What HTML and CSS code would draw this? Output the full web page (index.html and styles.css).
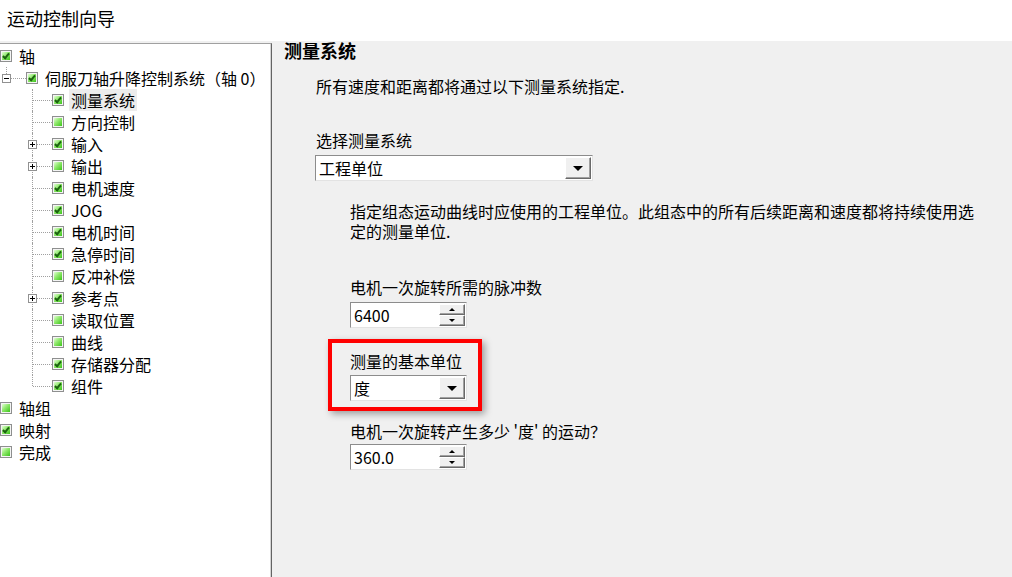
FILE: index.html
```html
<!DOCTYPE html>
<html lang="zh-CN">
<head>
    <meta charset="UTF-8">
    <title>运动控制向导</title>
    <link rel="stylesheet" href="styles.css">
</head>
<body>

<div class="title-bar">运动控制向导</div>

<div class="main">
    <div class="tree">
        <div class="row"><span class="cb checked"></span><span class="label">轴</span></div>
        <div class="row"><span class="cell ell"><span class="exp minus"></span></span><span class="cb checked"></span><span class="label">伺服刀轴升降控制系统（轴 0）</span></div>
        <div class="row"><span class="cell"></span><span class="cell tee"></span><span class="cb checked"></span><span class="label selected">测量系统</span></div>
        <div class="row"><span class="cell"></span><span class="cell tee"></span><span class="cb"></span><span class="label">方向控制</span></div>
        <div class="row"><span class="cell"></span><span class="cell tee"><span class="exp plus"></span></span><span class="cb checked"></span><span class="label">输入</span></div>
        <div class="row"><span class="cell"></span><span class="cell tee"><span class="exp plus"></span></span><span class="cb"></span><span class="label">输出</span></div>
        <div class="row"><span class="cell"></span><span class="cell tee"></span><span class="cb checked"></span><span class="label">电机速度</span></div>
        <div class="row"><span class="cell"></span><span class="cell tee"></span><span class="cb checked"></span><span class="label">JOG</span></div>
        <div class="row"><span class="cell"></span><span class="cell tee"></span><span class="cb checked"></span><span class="label">电机时间</span></div>
        <div class="row"><span class="cell"></span><span class="cell tee"></span><span class="cb checked"></span><span class="label">急停时间</span></div>
        <div class="row"><span class="cell"></span><span class="cell tee"></span><span class="cb"></span><span class="label">反冲补偿</span></div>
        <div class="row"><span class="cell"></span><span class="cell tee"><span class="exp plus"></span></span><span class="cb checked"></span><span class="label">参考点</span></div>
        <div class="row"><span class="cell"></span><span class="cell tee"></span><span class="cb"></span><span class="label">读取位置</span></div>
        <div class="row"><span class="cell"></span><span class="cell tee"></span><span class="cb"></span><span class="label">曲线</span></div>
        <div class="row"><span class="cell"></span><span class="cell tee"></span><span class="cb checked"></span><span class="label">存储器分配</span></div>
        <div class="row"><span class="cell"></span><span class="cell ell"></span><span class="cb checked"></span><span class="label">组件</span></div>
        <div class="row"><span class="cb"></span><span class="label">轴组</span></div>
        <div class="row"><span class="cb checked"></span><span class="label">映射</span></div>
        <div class="row"><span class="cb"></span><span class="label">完成</span></div>
    </div>

    <div class="content">
        <h2 class="heading">测量系统</h2>
        <p class="intro">所有速度和距离都将通过以下测量系统指定.</p>

        <div class="field-label system-label">选择测量系统</div>
        <div class="combo combo-wide">
            <span class="combo-text">工程单位</span>
            <span class="combo-btn"><span class="arrow-down"></span></span>
        </div>

        <p class="note">指定组态运动曲线时应使用的工程单位。此组态中的所有后续距离和速度都将持续使用选<br>定的测量单位.</p>

        <div class="group">
            <div class="field-label pulse-label">电机一次旋转所需的脉冲数</div>
            <div class="spin">
                <span class="spin-text">6400</span>
                <span class="spin-btns">
                    <span class="spin-btn"><span class="tri-up"></span></span>
                    <span class="spin-btn"><span class="tri-down"></span></span>
                </span>
            </div>

            <div class="highlight">
                <div class="field-label">测量的基本单位</div>
                <div class="combo combo-small">
                    <span class="combo-text">度</span>
                    <span class="combo-btn"><span class="arrow-down"></span></span>
                </div>
            </div>

            <div class="field-label travel-label">电机一次旋转产生多少 '度' 的运动？</div>
            <div class="spin">
                <span class="spin-text">360.0</span>
                <span class="spin-btns">
                    <span class="spin-btn"><span class="tri-up"></span></span>
                    <span class="spin-btn"><span class="tri-down"></span></span>
                </span>
            </div>
        </div>
    </div>
</div>

</body>
</html>
```

FILE: styles.css
```css
body {
    margin: 0;
    font-family: "Noto Sans CJK SC", "Noto Sans", sans-serif;
    font-size: 16px;
    color: #000;
    background: #f0f0f0;
    height: 577px;
    overflow: hidden;
    display: flex;
    flex-direction: column;
}
.title-bar {
    height: 41px;
    box-sizing: border-box;
    padding: 7px 0 0 7px;
    font-size: 18px;
    line-height: 22px;
    background: #fff;
}
.main {
    flex: 1;
    display: flex;
}

/* tree on the left */
.tree {
    width: 272px;
    box-sizing: border-box;
    margin-top: 2px;
    padding-top: 1px;
    background: #fff;
    border-top: 1px solid #a0a0a0;
    border-right: 1px solid #646464;
    box-shadow: inset -1px 0 0 #d4d4d4;
}
.row {
    display: flex;
    align-items: center;
    height: 22px;
}
.cell {
    position: relative;
    width: 26px;
    height: 22px;
    flex: none;
}
.cell.tee::before,
.cell.ell::before {
    content: "";
    position: absolute;
    left: 6px;
    top: 0;
    bottom: 0;
    border-left: 1px dotted #a0a0a0;
}
.cell.ell::before {
    bottom: 11px;
}
.cell.tee::after,
.cell.ell::after {
    content: "";
    position: absolute;
    left: 7px;
    right: 0;
    top: 11px;
    border-top: 1px dotted #a0a0a0;
}
.exp {
    position: absolute;
    left: 2px;
    top: 7px;
    width: 9px;
    height: 9px;
    box-sizing: border-box;
    border: 1px solid #919191;
    background: #fff;
    z-index: 1;
}
.exp::before {
    content: "";
    position: absolute;
    left: 1px;
    top: 3px;
    width: 5px;
    height: 1px;
    background: #000;
}
.exp.plus::after {
    content: "";
    position: absolute;
    left: 3px;
    top: 1px;
    width: 1px;
    height: 5px;
    background: #000;
}
.cb {
    position: relative;
    width: 12px;
    height: 12px;
    flex: none;
    box-sizing: border-box;
    border: 1px solid #8e8f8f;
    padding: 1px;
    background: #f4f4f4;
}
.cb::before {
    content: "";
    display: block;
    width: 8px;
    height: 8px;
    background: linear-gradient(135deg, #e2ffd4 0%, #8fe86c 45%, #3cc41a 100%);
}
.cb.checked::after {
    content: "";
    position: absolute;
    left: 3px;
    top: 1px;
    width: 2px;
    height: 5px;
    border-right: 2px solid #1c6410;
    border-bottom: 2px solid #1c6410;
    transform: rotate(40deg);
}
.label {
    margin-left: 7px;
    line-height: 22px;
    white-space: nowrap;
}
.label.selected {
    margin-left: 5px;
    padding: 0 2px;
    background: #ececec;
}

/* wizard page */
.content {
    flex: 1;
    padding-left: 12px;
}
.heading {
    margin: 0;
    font-size: 18px;
    font-weight: bold;
    line-height: 18px;
}
.intro {
    margin: 17px 0 0 32px;
    line-height: 20px;
}
.field-label {
    line-height: 20px;
    white-space: nowrap;
}
.system-label {
    margin: 34px 0 0 32px;
}
.combo {
    display: flex;
    height: 26px;
    box-sizing: border-box;
    background: #fff;
    border: 1px solid;
    border-color: #8c8c8c #e3e3e3 #e3e3e3 #8c8c8c;
    margin-top: 5px;
}
.combo-wide {
    width: 278px;
    margin-left: 31px;
}
.combo-small {
    width: 117px;
    margin-top: 4px;
}
.combo-text {
    flex: 1;
    padding-left: 3px;
    line-height: 24px;
}
.combo-btn,
.spin-btn {
    display: flex;
    align-items: center;
    justify-content: center;
    box-sizing: border-box;
    background: #f0f0f0;
    border: 1px solid;
    border-color: #fff #696969 #696969 #fff;
    box-shadow: inset -1px -1px 0 #a0a0a0;
}
.combo-btn {
    width: 26px;
    margin: 1px;
}
.arrow-down {
    width: 0;
    height: 0;
    border-left: 5px solid transparent;
    border-right: 5px solid transparent;
    border-top: 5px solid #000;
}
.note {
    margin: 20px 0 0 66px;
    line-height: 20px;
}
.group {
    margin-left: 66px;
}
.pulse-label {
    margin-top: 36px;
}
.spin {
    display: flex;
    width: 117px;
    height: 26px;
    margin-top: 5px;
    box-sizing: border-box;
    border: 1px solid;
    border-color: #8c8c8c #e3e3e3 #e3e3e3 #8c8c8c;
    background: #fff;
}
.spin-text {
    flex: 1;
    padding-left: 3px;
    line-height: 24px;
}
.spin-btns {
    display: flex;
    flex-direction: column;
    width: 26px;
    margin: 1px;
}
.spin-btn {
    flex: 1;
}
.tri-up,
.tri-down {
    width: 0;
    height: 0;
    border-left: 3px solid transparent;
    border-right: 3px solid transparent;
}
.tri-up {
    border-bottom: 3px solid #000;
}
.tri-down {
    border-top: 3px solid #000;
}
.highlight {
    display: inline-block;
    margin: 11px 0 0 -22px;
    padding: 8px 11px 6px 18px;
    border: 4px solid #ff0000;
    box-shadow: 3px 3px 7px rgba(0, 0, 0, 0.35);
}
.travel-label {
    margin-top: 10px;
}
.travel-label + .spin {
    margin-top: 3px;
}
```
